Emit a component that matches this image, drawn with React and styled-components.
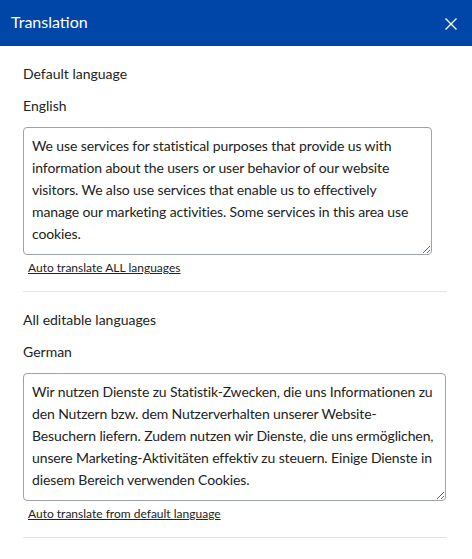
import React from 'react';
import styled, { createGlobalStyle } from 'styled-components';

const GlobalStyle = createGlobalStyle`
  body {
    margin: 0;
    background: #ffffff;
    font-family: "Segoe UI", Lato, "Noto Sans", sans-serif;
    color: #222222;
  }
`;

const sections = [
  {
    title: 'Default language',
    language: 'English',
    width: 409,
    text:
      'We use services for statistical purposes that provide us with information about the users or user behavior of our website visitors. We also use services that enable us to effectively manage our marketing activities. Some services in this area use cookies.',
    link: 'Auto translate ALL languages',
  },
  {
    title: 'All editable languages',
    language: 'German',
    width: 423,
    text:
      'Wir nutzen Dienste zu Statistik-Zwecken, die uns Informationen zu den Nutzern bzw. dem Nutzerverhalten unserer Website-Besuchern liefern. Zudem nutzen wir Dienste, die uns ermöglichen, unsere Marketing-Aktivitäten effektiv zu steuern. Einige Dienste in diesem Bereich verwenden Cookies.',
    link: 'Auto translate from default language',
  },
];

const App = () => {
  return (
    <>
      <GlobalStyle />
      <Dialog>
        <Header>
          <Title>Translation</Title>
          <CloseButton aria-label="Close">
            <svg width="12" height="12" viewBox="0 0 12 12">
              <path d="M0.5 0.5 L11.5 11.5 M11.5 0.5 L0.5 11.5" stroke="#ffffff" strokeWidth="1.4" />
            </svg>
          </CloseButton>
        </Header>
        <Body>
          {sections.map(s => (
            <Section key={s.language}>
              <Label>{s.title}</Label>
              <Label>{s.language}</Label>
              <TextArea $width={s.width} defaultValue={s.text} />
              <Link href="#">{s.link}</Link>
              <Divider />
            </Section>
          ))}
        </Body>
      </Dialog>
    </>
  );
};

const Dialog = styled.div`
  width: 472px;
  min-height: 559px;
  background: #ffffff;
`;

const Header = styled.div`
  display: flex;
  align-items: center;
  justify-content: space-between;
  height: 46px;
  padding: 0 15px 0 11px;
  box-sizing: border-box;
  background: #0046a8;
`;

const Title = styled.h1`
  margin: 0;
  font-size: 16px;
  font-weight: 400;
  color: #ffffff;
  margin-top: -4px;
`;

const CloseButton = styled.button`
  display: flex;
  padding: 0;
  border: 0;
  background: none;
  cursor: pointer;
  margin-top: 2px;
`;

const Body = styled.div`
  padding: 18px 25px 0 23px;
`;

const Section = styled.div`
  display: flex;
  flex-direction: column;
  align-items: flex-start;

  & + & {
    margin-top: 18px;
  }
`;

const Label = styled.div`
  font-size: 14px;
  line-height: 20px;
  color: #222222;

  & + & {
    margin-top: 12px;
  }
`;

const TextArea = styled.textarea`
  width: ${props => props.$width}px;
  height: 128px;
  margin-top: 11px;
  padding: 7px 8px;
  box-sizing: border-box;
  border: 1px solid #9ea3ab;
  border-radius: 4px;
  font-family: inherit;
  font-size: 14px;
  line-height: 22px;
  letter-spacing: -0.12px;
  color: #222222;
  resize: vertical;
  outline: none;
`;

const Link = styled.a`
  margin: 5px 0 0 5px;
  font-size: 12px;
  line-height: 16px;
  color: #222222;
  text-decoration: underline;
`;

const Divider = styled.hr`
  align-self: stretch;
  margin: 15px 0 0;
  border: 0;
  border-top: 1px solid #e3e3e3;
`;

export default App;
